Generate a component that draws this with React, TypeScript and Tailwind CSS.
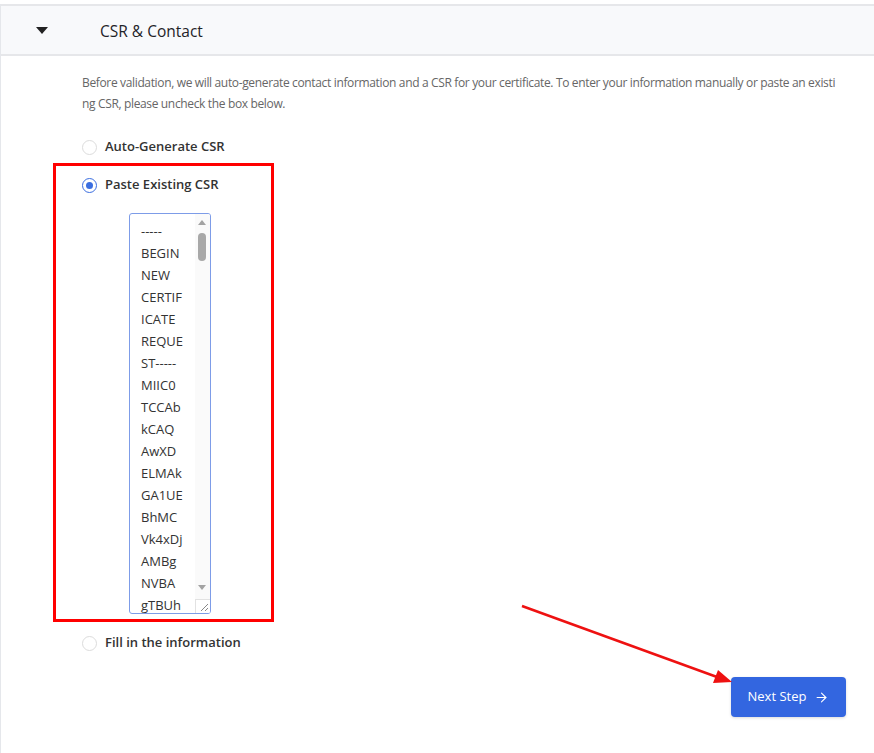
import { ArrowRight } from 'lucide-react';

const csrLines = [
  '-----', 'BEGIN', 'NEW', 'CERTIF', 'ICATE', 'REQUE', 'ST-----', 'MIIC0', 'TCCAb',
  'kCAQ', 'AwXD', 'ELMAk', 'GA1UE', 'BhMC', 'Vk4xDj', 'AMBg', 'NVBA', 'gTBUh',
];

function Radio({ checked, label }: { checked?: boolean; label: string }) {
  return (
    <label className="flex items-center h-[20px] gap-[8px] cursor-pointer">
      <span
        className={
          checked
            ? 'w-[15px] h-[15px] rounded-full border border-[#3b6ee0] flex items-center justify-center bg-white'
            : 'w-[15px] h-[15px] rounded-full border border-[#dcdcdc] bg-white'
        }
      >
        {checked && <span className="w-[7px] h-[7px] rounded-full bg-[#3b6ee0]" />}
      </span>
      <span className="text-[13px] font-semibold text-[#333]">{label}</span>
    </label>
  );
}

// fake textarea with the classic scrollbar look
function CsrBox() {
  return (
    <div className="ml-[47px] mt-[18px] w-[82px] h-[401px] rounded-[3px] border border-[#7d9ce8] flex overflow-hidden bg-white">
      <div className="flex-1 pl-[11px] pt-[6px] overflow-hidden">
        {csrLines.map((line, i) => (
          <div key={i} className="h-[22px] leading-[22px] text-[13px] text-[#333]">
            {line}
          </div>
        ))}
      </div>
      <div className="w-[15px] relative bg-[#fafafa]">
        <div className="absolute top-[6px] left-[3px] w-0 h-0 border-l-[4px] border-r-[4px] border-b-[5px] border-l-transparent border-r-transparent border-b-[#a3a3a3]" />
        <div className="absolute top-[19px] left-[3px] w-[8px] h-[28px] rounded-full bg-[#a8a8a8]" />
        <div className="absolute top-[371px] left-[3px] w-0 h-0 border-l-[4px] border-r-[4px] border-t-[5px] border-l-transparent border-r-transparent border-t-[#a3a3a3]" />
        <div className="absolute bottom-0 right-0 w-[15px] h-[14px] border-l border-t border-[#e2e2e2] bg-white">
          <svg width="14" height="13" viewBox="0 0 14 13" className="absolute right-0 bottom-0">
            <line x1="12" y1="4" x2="5" y2="11" stroke="#888" strokeWidth="1" />
            <line x1="12" y1="8" x2="9" y2="11" stroke="#888" strokeWidth="1" />
          </svg>
        </div>
      </div>
    </div>
  );
}

export default function App() {
  return (
    <div className="relative min-h-screen bg-white border-l border-[#e5e7eb]" style={{ fontFamily: '"Open Sans", "Noto Sans", sans-serif' }}>
      {/* Section header */}
      <div className="mt-[4px] h-[52px] flex items-center bg-[#f8f9fb] border-y-2 border-[#e6e7ea]">
        <span className="ml-[35px] w-0 h-0 border-l-[6px] border-r-[6px] border-t-[7px] border-l-transparent border-r-transparent border-t-[#222]" />
        <h2 className="ml-[52px] mt-[3px] text-[15.5px] font-medium text-[#1f2328]">CSR &amp; Contact</h2>
      </div>

      <div className="pl-[81px] pt-[16px]">
        <p className="text-[12px] leading-[21px] text-[#666] tracking-[-0.35px]">
          <span className="whitespace-nowrap">
            Before validation, we will auto-generate contact information and a CSR for your certificate. To enter your information manually or paste an existi
          </span>
          <br />
          ng CSR, please uncheck the box below.
        </p>

        <div className="mt-[23px]">
          <Radio label="Auto-Generate CSR" />
        </div>
      </div>

      {/* highlighted option */}
      <div className="ml-[52px] mt-[6px] w-[221px] border-[3px] border-[#ff0000] pt-[9px] pb-[5px] pl-[26px]">
        <Radio checked label="Paste Existing CSR" />
        <CsrBox />
      </div>

      <div className="pl-[81px] mt-[11px]">
        <Radio label="Fill in the information" />
      </div>

      <div className="flex justify-end pr-[28px] mt-[24px]">
        <button className="w-[115px] h-[40px] rounded-[4px] bg-[#3366e0] text-white text-[13px] flex items-center justify-center gap-[8px] shadow-[0_1px_3px_rgba(0,0,0,0.15)]">
          Next Step
          <ArrowRight size={15} strokeWidth={1.75} />
        </button>
      </div>

      {/* annotation arrow */}
      <svg className="absolute left-0 top-0 pointer-events-none" width="874" height="753">
        <line x1="521" y1="602" x2="716" y2="673" stroke="#ee1111" strokeWidth="2.5" />
        <polygon points="731,678 712,679 717,666" fill="#ee1111" />
      </svg>
    </div>
  );
}
